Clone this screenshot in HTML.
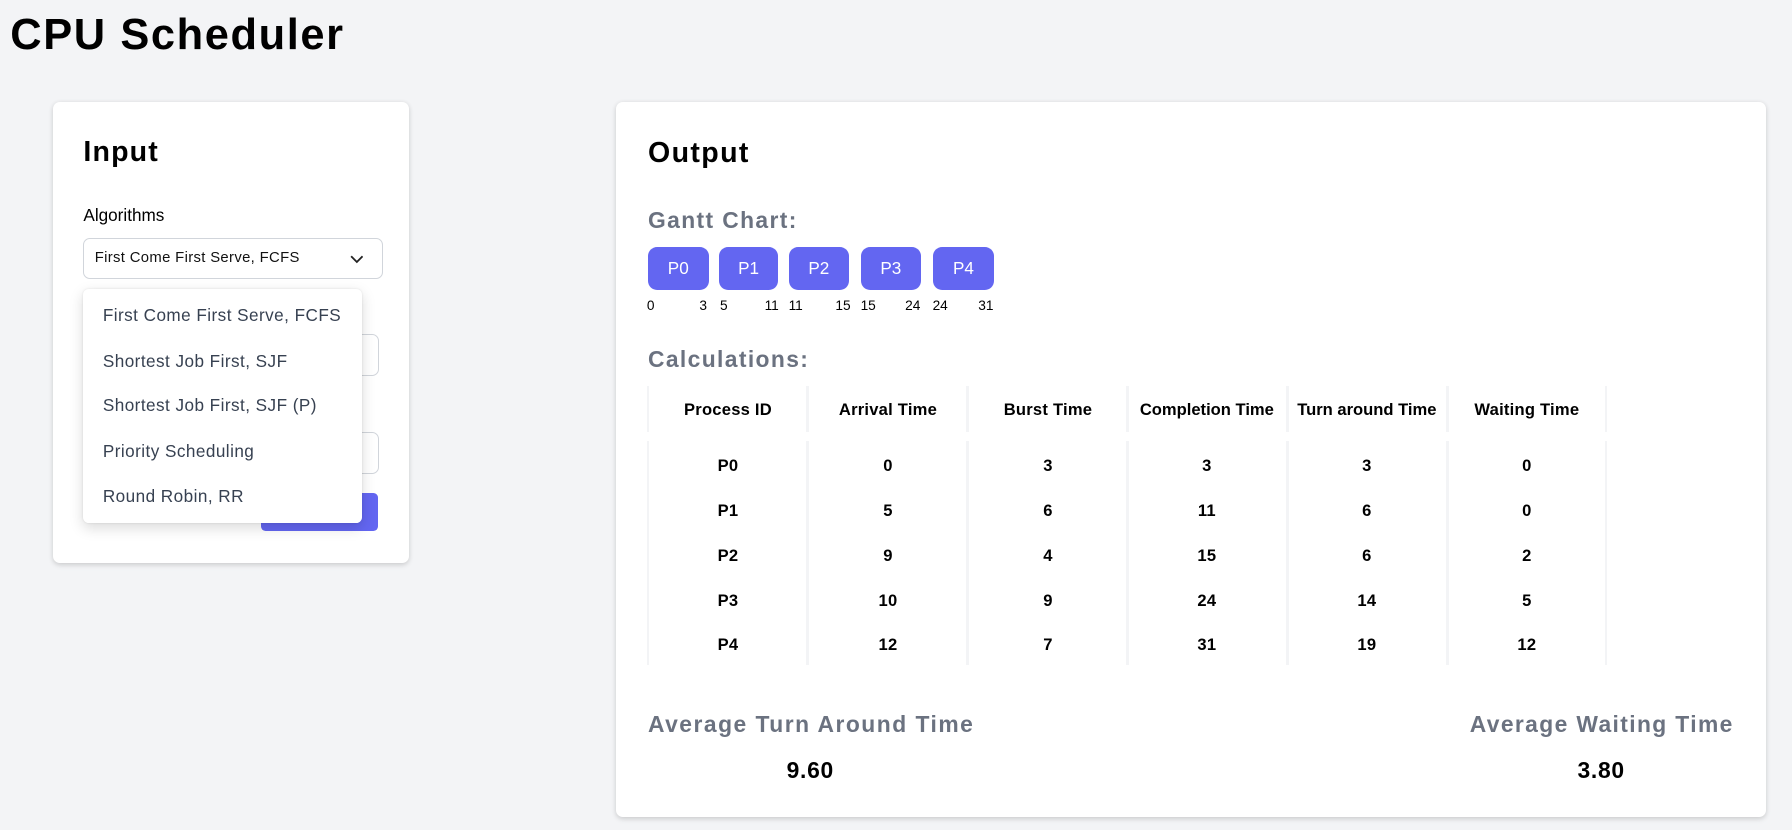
<!DOCTYPE html>
<html><head><meta charset="utf-8"><style>
html{zoom:1.142857}
body{margin:0;width:1568px;height:726px;background:#f3f4f6;font-family:"Liberation Sans",Arial,sans-serif;position:relative;overflow:hidden;color:#000}
.a{position:absolute;white-space:nowrap}
.card{position:absolute;background:#fff;border-radius:6px;box-shadow:0 1px 4px rgba(0,0,0,.12),0 2px 6px rgba(0,0,0,.06)}
.g{color:#6b7280;font-weight:bold;font-size:20px;letter-spacing:1.2px}
.box{position:absolute;top:216px;height:38px;background:#6366f1;border-radius:8px;color:#fff;font-size:15px;line-height:38px;text-align:center}
.t{position:absolute;top:261px;font-size:12px}
.sep{position:absolute;width:3px;background:#f3f4f6}
.c{position:absolute;width:140px;text-align:center;font-size:14.5px;font-weight:bold;letter-spacing:.2px}
.item{position:absolute;left:17px;font-size:15px;color:#374151;letter-spacing:.4px}
</style></head><body>
<div class="a" style="left:9px;top:8px;font-size:38px;font-weight:bold;line-height:46px;letter-spacing:1.4px">CPU Scheduler</div>

<div class="card" style="left:46px;top:89px;width:312px;height:404px">
 <div class="a" style="left:27px;top:30px;font-size:25px;font-weight:bold;letter-spacing:1px">Input</div>
 <div class="a" style="left:27px;top:90px;font-size:15px">Algorithms</div>
 <div class="a" style="left:27px;top:119px;width:260px;height:34px;border:1px solid #d1d5db;border-radius:6px">
  <div class="a" style="left:9px;top:10px;font-size:13px;color:#111;letter-spacing:.3px">First Come First Serve, FCFS</div>
  <svg class="a" style="left:232px;top:13px" width="12" height="10" viewBox="0 0 12 10"><path d="M1 2l5 5 5-5" fill="none" stroke="#222" stroke-width="1.6"/></svg>
 </div>
 <div class="a" style="left:27px;top:203px;width:257px;height:35px;border:1px solid #d1d5db;border-radius:6px"></div>
 <div class="a" style="left:27px;top:289px;width:257px;height:35px;border:1px solid #d1d5db;border-radius:6px"></div>
 <div class="a" style="left:182px;top:342px;width:103px;height:34px;background:#6366f1;border-radius:4px"></div>
 <div class="a" style="left:27px;top:164px;width:244px;height:205px;background:#fff;border-radius:5px;box-shadow:0 4px 12px rgba(0,0,0,.15),0 0 2px rgba(0,0,0,.1)">
  <div class="item" style="top:14px">First Come First Serve, FCFS</div>
  <div class="item" style="top:54px">Shortest Job First, SJF</div>
  <div class="item" style="top:93px">Shortest Job First, SJF (P)</div>
  <div class="item" style="top:133px">Priority Scheduling</div>
  <div class="item" style="top:172px">Round Robin, RR</div>
 </div>
</div>

<div class="card" style="left:539px;top:89px;width:1006px;height:626px"></div>
<div class="a" style="left:567px;top:120px;font-size:25px;font-weight:bold;letter-spacing:1.2px">Output</div>
<div class="a g" style="left:567px;top:181px">Gantt Chart:</div>
<div class="box" style="left:567px;width:53px">P0</div>
<div class="box" style="left:629px;width:52px">P1</div>
<div class="box" style="left:690px;width:53px">P2</div>
<div class="box" style="left:753px;width:53px">P3</div>
<div class="box" style="left:816px;width:54px">P4</div>
<div class="t" style="left:566px">0</div><div class="t" style="left:612px">3</div>
<div class="t" style="left:630px">5</div><div class="t" style="left:669px">11</div>
<div class="t" style="left:690px">11</div><div class="t" style="left:731px">15</div>
<div class="t" style="left:753px">15</div><div class="t" style="left:792px">24</div>
<div class="t" style="left:816px">24</div><div class="t" style="left:856px">31</div>
<div class="a g" style="left:567px;top:303px">Calculations:</div>

<div class="sep" style="left:566px;top:338px;height:40px;width:2px"></div>
<div class="sep" style="left:705px;top:338px;height:40px"></div><div class="sep" style="left:705px;top:386px;height:196px"></div>
<div class="sep" style="left:845px;top:338px;height:40px"></div><div class="sep" style="left:845px;top:386px;height:196px"></div>
<div class="sep" style="left:985px;top:338px;height:40px"></div><div class="sep" style="left:985px;top:386px;height:196px"></div>
<div class="sep" style="left:1125px;top:338px;height:40px"></div><div class="sep" style="left:1125px;top:386px;height:196px"></div>
<div class="sep" style="left:1265px;top:338px;height:40px"></div><div class="sep" style="left:1265px;top:386px;height:196px"></div>
<div class="sep" style="left:1404px;top:338px;height:40px;width:2px"></div><div class="sep" style="left:1404px;top:386px;height:196px;width:2px"></div>
<div class="sep" style="left:566px;top:386px;height:196px;width:2px"></div>

<div class="c" style="left:567px;top:350px">Process ID</div>
<div class="c" style="left:707px;top:350px">Arrival Time</div>
<div class="c" style="left:847px;top:350px">Burst Time</div>
<div class="c" style="left:986px;top:350px;letter-spacing:0">Completion Time</div>
<div class="c" style="left:1126px;top:350px;letter-spacing:0">Turn around Time</div>
<div class="c" style="left:1266px;top:350px">Waiting Time</div>

<div class="c" style="left:567px;top:399px">P0</div><div class="c" style="left:707px;top:399px">0</div><div class="c" style="left:847px;top:399px">3</div><div class="c" style="left:986px;top:399px">3</div><div class="c" style="left:1126px;top:399px">3</div><div class="c" style="left:1266px;top:399px">0</div>
<div class="c" style="left:567px;top:438px">P1</div><div class="c" style="left:707px;top:438px">5</div><div class="c" style="left:847px;top:438px">6</div><div class="c" style="left:986px;top:438px">11</div><div class="c" style="left:1126px;top:438px">6</div><div class="c" style="left:1266px;top:438px">0</div>
<div class="c" style="left:567px;top:478px">P2</div><div class="c" style="left:707px;top:478px">9</div><div class="c" style="left:847px;top:478px">4</div><div class="c" style="left:986px;top:478px">15</div><div class="c" style="left:1126px;top:478px">6</div><div class="c" style="left:1266px;top:478px">2</div>
<div class="c" style="left:567px;top:517px">P3</div><div class="c" style="left:707px;top:517px">10</div><div class="c" style="left:847px;top:517px">9</div><div class="c" style="left:986px;top:517px">24</div><div class="c" style="left:1126px;top:517px">14</div><div class="c" style="left:1266px;top:517px">5</div>
<div class="c" style="left:567px;top:556px">P4</div><div class="c" style="left:707px;top:556px">12</div><div class="c" style="left:847px;top:556px">7</div><div class="c" style="left:986px;top:556px">31</div><div class="c" style="left:1126px;top:556px">19</div><div class="c" style="left:1266px;top:556px">12</div>

<div class="a g" style="left:567px;top:622px;letter-spacing:1.3px">Average Turn Around Time</div>
<div class="a" style="left:659px;width:100px;text-align:center;top:662px;font-size:20px;font-weight:bold;letter-spacing:.6px">9.60</div>
<div class="a g" style="right:51px;top:622px;letter-spacing:1.2px">Average Waiting Time</div>
<div class="a" style="left:1351px;width:100px;text-align:center;top:662px;font-size:20px;font-weight:bold;letter-spacing:.6px">3.80</div>
</body></html>
